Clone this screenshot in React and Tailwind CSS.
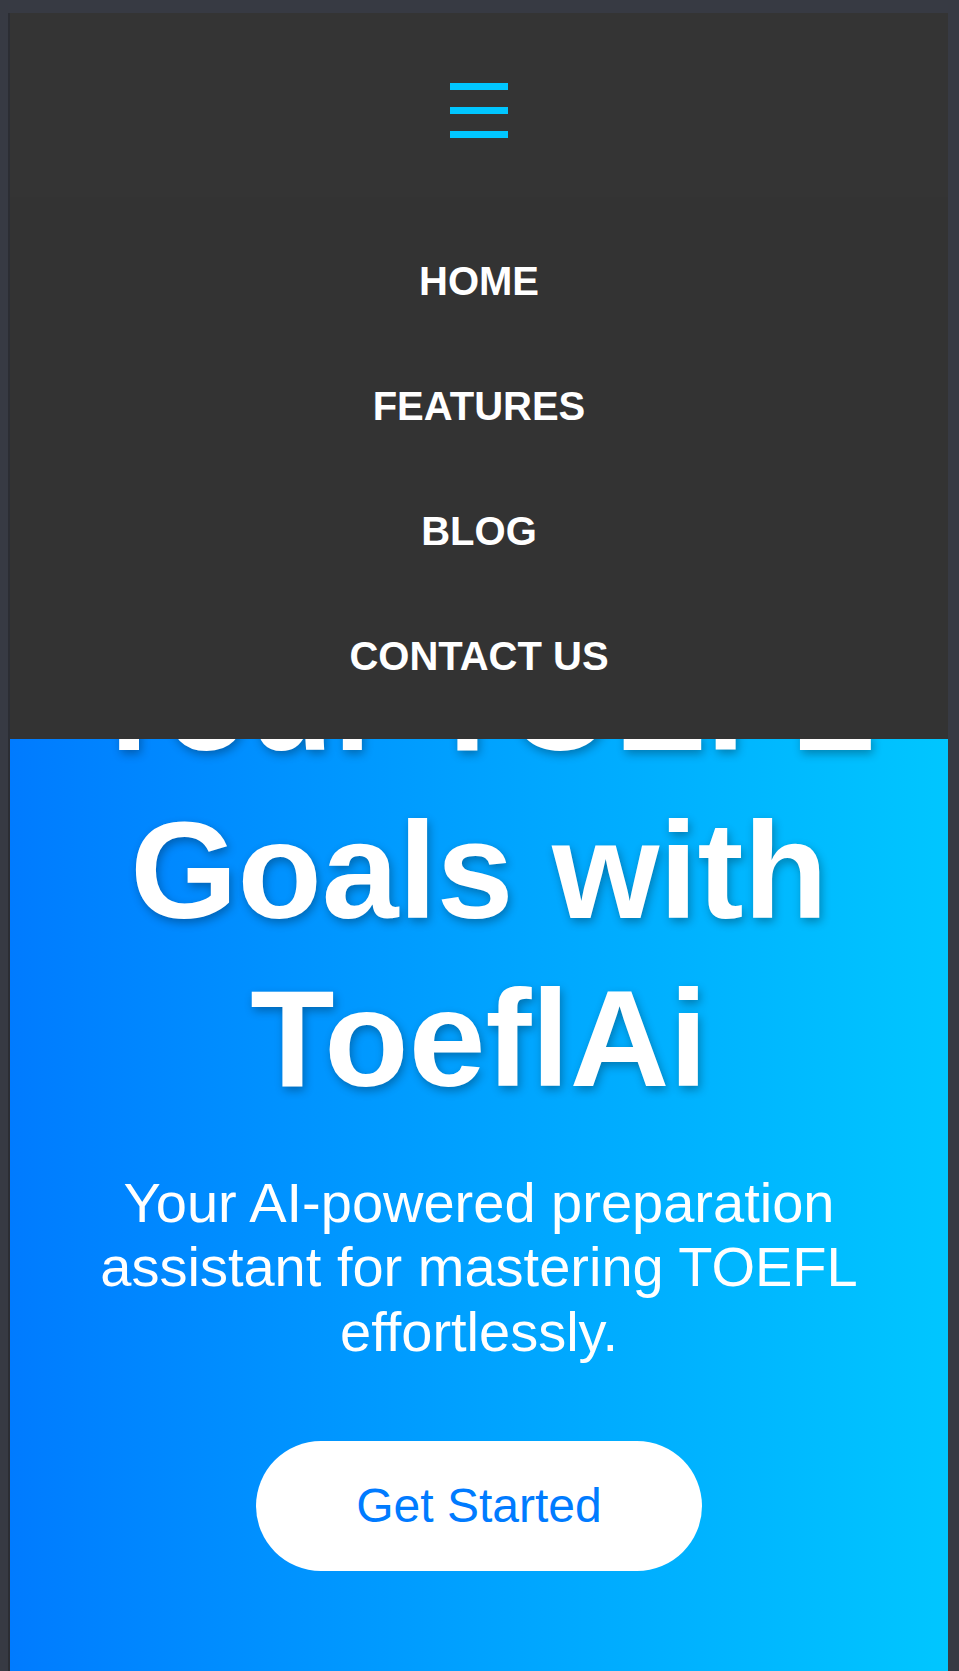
import { useState } from 'react';

const links = ['HOME', 'FEATURES', 'BLOG', 'CONTACT US'];

const App = () => {
  const [menuOpen, setMenuOpen] = useState(true);

  return (
    <div className="min-h-screen bg-[#373a43] pl-[8px] pr-[11px] pt-[13px] font-['Liberation_Sans',Arial,sans-serif]">
      <div className="relative flex min-h-[1658px] flex-col border-l-2 border-[#2b2d33]">
        <header className="flex h-[184px] justify-center bg-[#343434] pt-[70px]">
          <button
            onClick={() => setMenuOpen(!menuOpen)}
            className="flex h-[56px] w-[58px] flex-col gap-[17px]"
            aria-label="Toggle menu"
          >
            <span className="block h-[7px] w-[58px] bg-[#00c6ff]" />
            <span className="block h-[7px] w-[58px] bg-[#00c6ff]" />
            <span className="block h-[7px] w-[58px] bg-[#00c6ff]" />
          </button>
        </header>

        {menuOpen && (
          <nav className="absolute left-0 right-0 top-[184px] z-10 bg-[#333333] py-[21px]">
            <ul>
              {links.map((link) => (
                <li key={link} className="flex h-[125px] items-center justify-center">
                  <a href="#" className="text-[40px] font-bold leading-[46px] text-white">
                    {link}
                  </a>
                </li>
              ))}
            </ul>
          </nav>
        )}

        <section className="flex flex-1 flex-col items-center bg-linear-to-r from-[#007bff] to-[#00c6ff] px-[40px] pb-[100px] pt-[253px] text-center">
          <h1 className="text-[138px] font-bold leading-[168px] text-white [text-shadow:2px_4px_10px_rgba(0,0,0,0.3)]">
            Achieve Your TOEFL Goals with ToeflAi
          </h1>
          <p className="mt-[49px] text-[56px] leading-[1.15] text-white">
            Your AI-powered preparation assistant for mastering TOEFL effortlessly.
          </p>
          <button className="mt-[77px] flex h-[130px] w-[446px] items-center justify-center rounded-full bg-white text-[48px] text-[#007bff]">
            Get Started
          </button>
        </section>
      </div>
    </div>
  );
};

export default App;
